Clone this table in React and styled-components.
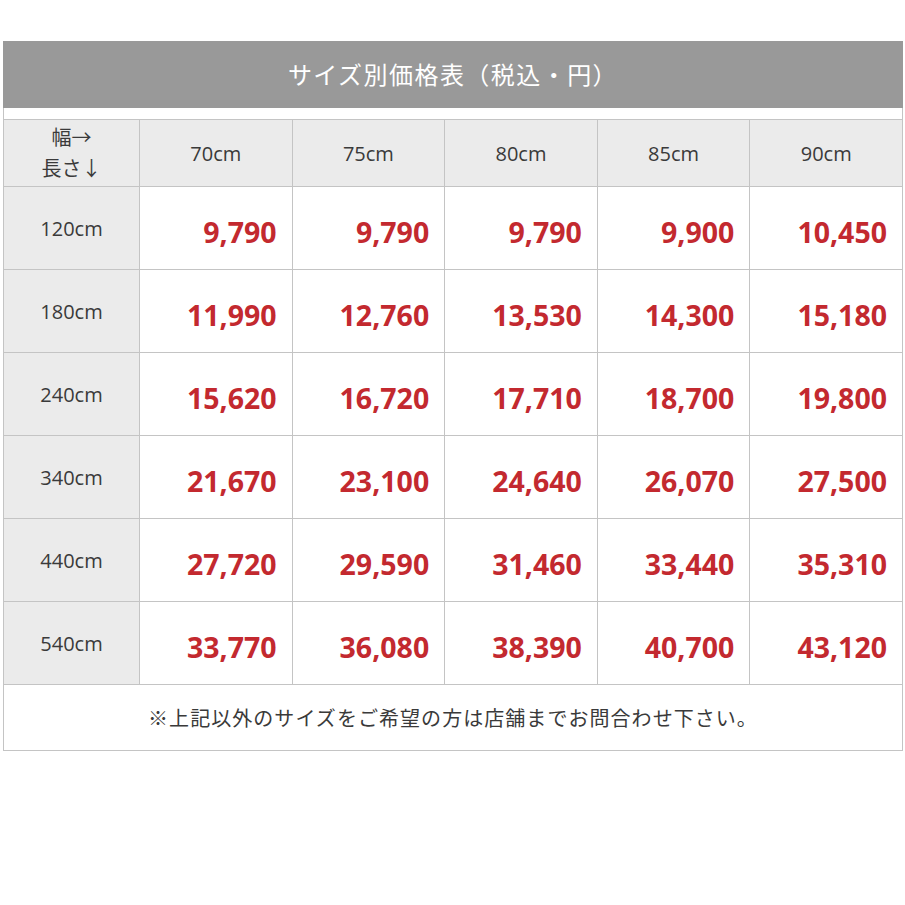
import React from "react";
import styled, { createGlobalStyle } from "styled-components";

const Global = createGlobalStyle`
  html, body { margin: 0; padding: 0; background: #fff; }
  body { font-family: "Open Sans", "Noto Sans CJK JP", sans-serif; }
`;

const Wrapper = styled.div`
  box-sizing: border-box;
  margin: 41px 0 0 3px;
  width: 900px;
  border: 1px solid #c4c4c4;
  border-top: none;
  font-family: "Open Sans", "Noto Sans CJK JP", sans-serif;
  color: #3a3a3a;
`;

const Title = styled.div`
  height: 67px;
  background: #999999;
  color: #fff;
  font-size: 24px;
  display: flex;
  align-items: center;
  justify-content: center;
  padding-bottom: 2px;
  box-sizing: border-box;
  letter-spacing: 1.45px;
  margin: 0 -1px;
`;

const Grid = styled.div`
  margin-top: 11px;
  display: grid;
  grid-template-columns: 135px repeat(5, 1fr);
  grid-template-rows: 67px repeat(6, 83px) 66px;
`;

const Cell = styled.div`
  box-sizing: border-box;
  border-top: 1px solid #c4c4c4;
  border-left: ${(p) => (p.$first ? "none" : "1px solid #c4c4c4")};
  background: ${(p) => (p.$shaded ? "#ebebeb" : "#fff")};
  display: flex;
  align-items: center;
  justify-content: center;
  font-size: 20px;
  line-height: 1.55;
  text-align: center;
`;

const PriceCell = styled(Cell)`
  justify-content: flex-end;
  padding: 8px 15px 0 0;
  color: #c3292f;
  font-weight: 700;
  font-size: 28.5px;
`;

const Footer = styled(Cell)`
  grid-column: 1 / -1;
  font-size: 20px;
  letter-spacing: 1.05px;
  padding-top: 2px;
`;

const widths = ["70cm", "75cm", "80cm", "85cm", "90cm"];
const rows = [
  ["120cm", ["9,790", "9,790", "9,790", "9,900", "10,450"]],
  ["180cm", ["11,990", "12,760", "13,530", "14,300", "15,180"]],
  ["240cm", ["15,620", "16,720", "17,710", "18,700", "19,800"]],
  ["340cm", ["21,670", "23,100", "24,640", "26,070", "27,500"]],
  ["440cm", ["27,720", "29,590", "31,460", "33,440", "35,310"]],
  ["540cm", ["33,770", "36,080", "38,390", "40,700", "43,120"]],
];

export default function App() {
  return (
    <>
      <Global />
      <Wrapper>
        <Title>サイズ別価格表（税込・円）</Title>
        <Grid>
          <Cell $first $shaded>
            幅→
            <br />
            長さ↓
          </Cell>
          {widths.map((w) => (
            <Cell key={w} $shaded>
              {w}
            </Cell>
          ))}
          {rows.map(([len, prices]) => (
            <React.Fragment key={len}>
              <Cell $first $shaded>
                {len}
              </Cell>
              {prices.map((p, i) => (
                <PriceCell key={i}>{p}</PriceCell>
              ))}
            </React.Fragment>
          ))}
          <Footer $first>※上記以外のサイズをご希望の方は店舗までお問合わせ下さい。</Footer>
        </Grid>
      </Wrapper>
    </>
  );
}
